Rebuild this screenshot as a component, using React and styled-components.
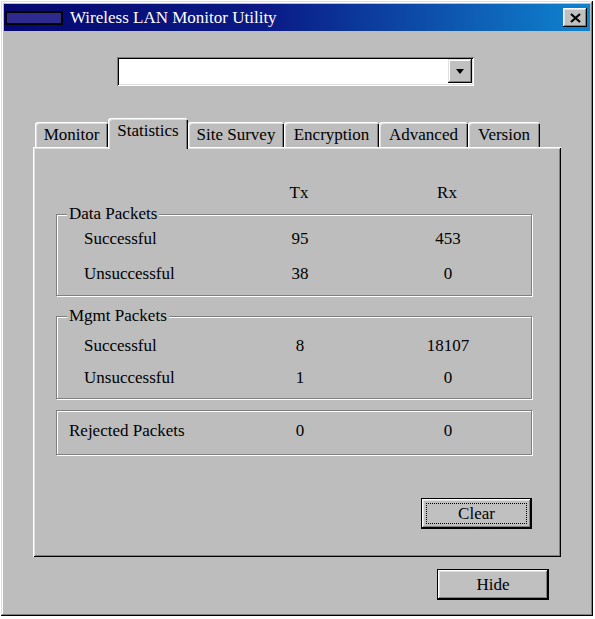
import React from "react";
import styled, { createGlobalStyle } from "styled-components";

const GlobalStyle = createGlobalStyle`
  body {
    margin: 0;
    background: #ffffff;
  }
`;

const serif = `"Liberation Serif", "DejaVu Serif", "Times New Roman", serif`;

const Window = styled.div`
  margin: 1px 0 0 1px;
  width: 592px;
  height: 615px;
  box-sizing: border-box;
  padding: 3px;
  background: #bdbdbd;
  display: flex;
  flex-direction: column;
  font-family: ${serif};
  color: #000;
  box-shadow: inset -1px -1px #000, inset 1px 1px #dfdfdf,
    inset -2px -2px #808080, inset 2px 2px #fff;
`;

const TitleBar = styled.div`
  height: 27px;
  display: flex;
  align-items: center;
  padding: 0 3px 0 1px;
  background: linear-gradient(90deg, #060870 0%, #0a1a86 45%, #1084d0 100%);
  color: #fff;
  font-size: 17px;
`;

const AppIcon = styled.div`
  width: 58px;
  height: 14px;
  box-sizing: border-box;
  border: 2px solid #000;
  background: #2e2a90;
  margin-right: 7px;
`;

const Title = styled.span`
  flex: 1;
  line-height: 27px;
  font-family: ${serif};
`;

const CloseButton = styled.div`
  width: 24px;
  height: 19px;
  background: #c0c0c0;
  display: flex;
  align-items: center;
  justify-content: center;
  box-shadow: inset -1px -1px #000, inset 1px 1px #fff,
    inset -2px -2px #808080, inset 2px 2px #dfdfdf;
`;

const Content = styled.div`
  display: flex;
  flex-direction: column;
  padding: 0 29px;
`;

const Combo = styled.div`
  margin: 26px 0 0 84px;
  width: 357px;
  height: 29px;
  box-sizing: border-box;
  padding: 2px;
  background: #fff;
  display: flex;
  justify-content: flex-end;
  box-shadow: inset 1px 1px #808080, inset -1px -1px #fff,
    inset 2px 2px #000, inset -2px -2px #dfdfdf;
`;

const ComboArrow = styled.div`
  width: 24px;
  height: 24px;
  background: #c0c0c0;
  display: flex;
  align-items: center;
  justify-content: center;
  box-shadow: inset -1px -1px #000, inset 1px 1px #dfdfdf,
    inset -2px -2px #808080, inset 2px 2px #fff;
`;

const TabRow = styled.div`
  margin-top: 32px;
  height: 29px;
  padding-left: 2px;
  display: flex;
  align-items: flex-end;
`;

const Tab = styled.div`
  position: relative;
  z-index: ${(p) => (p.$active ? 2 : 1)};
  width: ${(p) => p.$w}px;
  height: ${(p) => (p.$active ? 31 : 25)}px;
  margin-bottom: ${(p) => (p.$active ? -2 : 0)}px;
  box-sizing: border-box;
  background: #bdbdbd;
  border-radius: 3px 3px 0 0;
  font-family: ${serif};
  font-size: 17px;
  line-height: ${(p) => (p.$active ? 26 : 25)}px;
  text-align: center;
  white-space: nowrap;
  box-shadow: inset 1px 1px #fff, inset 2px 2px #dfdfdf, inset -1px 0 #000,
    inset -2px 0 #808080;
`;

const Panel = styled.div`
  position: relative;
  width: 528px;
  height: 410px;
  box-sizing: border-box;
  padding: 36px 29px 0 23px;
  display: flex;
  flex-direction: column;
  box-shadow: inset 1px 1px #fff, inset -1px -1px #000,
    inset 2px 2px #dfdfdf, inset -2px -2px #808080;
`;

const StatsRow = styled.div`
  display: grid;
  grid-template-columns: 169px 148px 148px;
  height: ${(p) => p.$h || 30}px;
  align-items: center;
  font-family: ${serif};
  font-size: 17px;
`;

const Label = styled.span`
  padding-left: ${(p) => p.$indent}px;
`;

const Value = styled.span`
  text-align: center;
`;

const Group = styled.fieldset`
  margin: ${(p) => p.$mt}px 0 0;
  padding: ${(p) => p.$pt}px 0 ${(p) => p.$pb}px;
  min-width: 0;
  display: flex;
  flex-direction: column;
  gap: ${(p) => p.$gap || 0}px;
  border: 1px solid #808080;
  box-shadow: inset 1px 1px #fff, 1px 1px #fff;
`;

const Legend = styled.legend`
  margin-left: 10px;
  padding: 0 2px;
  line-height: 20px;
  font-family: ${serif};
  font-size: 17px;
  background: #bdbdbd;
`;

const Button = styled.div`
  width: ${(p) => p.$w}px;
  height: 31px;
  box-sizing: border-box;
  margin-top: ${(p) => p.$mt}px;
  margin-right: ${(p) => p.$mr || 0}px;
  align-self: flex-end;
  border: 1px solid #000;
  padding: 4px;
  background: #c0c0c0;
  font-family: ${serif};
  font-size: 17px;
  display: flex;
  box-shadow: inset -1px -1px #000, inset 1px 1px #fff,
    inset -2px -2px #808080, inset 2px 2px #dfdfdf;
`;

const ButtonFace = styled.span`
  flex: 1;
  display: flex;
  align-items: center;
  justify-content: center;
  border: 1px dotted ${(p) => (p.$focus ? "#000" : "transparent")};
`;

const rows = {
  data: [
    ["Successful", "95", "453"],
    ["Unsuccessful", "38", "0"],
  ],
  mgmt: [
    ["Successful", "8", "18107"],
    ["Unsuccessful", "1", "0"],
  ],
};

const tabs = [
  ["Monitor", 73],
  ["Statistics", 80],
  ["Site Survey", 96],
  ["Encryption", 95],
  ["Advanced", 89],
  ["Version", 72],
];

function Row({ label, tx, rx, indent = 27 }) {
  return (
    <StatsRow>
      <Label $indent={indent}>{label}</Label>
      <Value>{tx}</Value>
      <Value>{rx}</Value>
    </StatsRow>
  );
}

export default function App() {
  return (
    <>
      <GlobalStyle />
      <Window>
        <TitleBar>
          <AppIcon />
          <Title>Wireless LAN Monitor Utility</Title>
          <CloseButton>
            <svg width="11" height="10" viewBox="0 0 11 10">
              <path d="M1 1 L10 9 M10 1 L1 9" stroke="#000" strokeWidth="2.2" />
            </svg>
          </CloseButton>
        </TitleBar>
        <Content>
          <Combo>
            <ComboArrow>
              <svg width="8" height="5" viewBox="0 0 8 5">
                <path d="M0 0 H8 L4 5 Z" fill="#000" />
              </svg>
            </ComboArrow>
          </Combo>
          <TabRow>
            {tabs.map(([name, w]) => (
              <Tab key={name} $w={w} $active={name === "Statistics"}>
                {name}
              </Tab>
            ))}
          </TabRow>
          <Panel>
            <StatsRow $h={20}>
              <span />
              <Value>Tx</Value>
              <Value>Rx</Value>
            </StatsRow>
            <Group $mt={1} $pt={0} $pb={6} $gap={5}>
              <Legend>Data Packets</Legend>
              {rows.data.map(([l, t, r]) => (
                <Row key={l} label={l} tx={t} rx={r} />
              ))}
            </Group>
            <Group $mt={10} $pt={5} $pb={5} $gap={2}>
              <Legend>Mgmt Packets</Legend>
              {rows.mgmt.map(([l, t, r]) => (
                <Row key={l} label={l} tx={t} rx={r} />
              ))}
            </Group>
            <Group $mt={11} $pt={5} $pb={8}>
              <Row label="Rejected Packets" tx="0" rx="0" indent={12} />
            </Group>
            <Button $w={111} $mt={43}>
              <ButtonFace $focus>Clear</ButtonFace>
            </Button>
          </Panel>
          <Button $w={112} $mt={12} $mr={12}>
            <ButtonFace>Hide</ButtonFace>
          </Button>
        </Content>
      </Window>
    </>
  );
}
